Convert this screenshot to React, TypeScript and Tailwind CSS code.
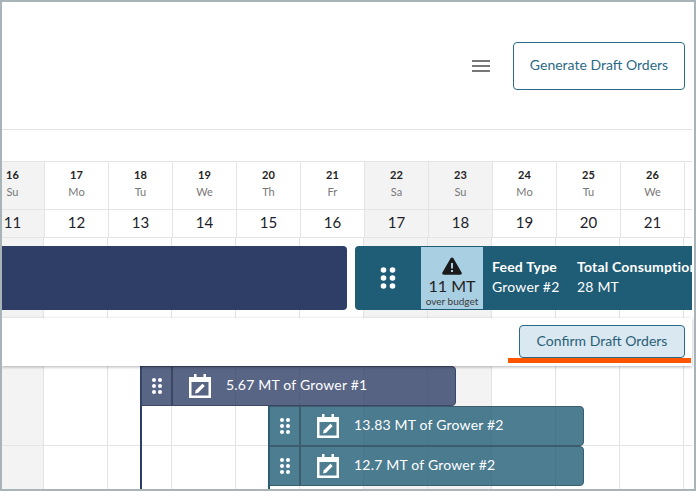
const font = { fontFamily: 'Lato, "Noto Sans", sans-serif' };

const days = [
  { d: 16, w: 'Su', n: 11, off: true },
  { d: 17, w: 'Mo', n: 12 },
  { d: 18, w: 'Tu', n: 13 },
  { d: 19, w: 'We', n: 14 },
  { d: 20, w: 'Th', n: 15 },
  { d: 21, w: 'Fr', n: 16 },
  { d: 22, w: 'Sa', n: 17, off: true },
  { d: 23, w: 'Su', n: 18, off: true },
  { d: 24, w: 'Mo', n: 19 },
  { d: 25, w: 'Tu', n: 20 },
  { d: 26, w: 'We', n: 21 },
];

function Dots({ big }: { big?: boolean }) {
  const r = big ? 2.8 : 2;
  const dx = big ? 4.5 : 3;
  const h = big ? 8 : 6;
  return (
    <svg width={big ? 18 : 12} height={big ? 26 : 18} viewBox={big ? '-9 -13 18 26' : '-6 -9 12 18'} fill="#fff">
      {[-1, 1].map((x) =>
        [-1, 0, 1].map((y) => <circle key={`${x}${y}`} cx={x * dx} cy={y * h} r={r} />)
      )}
    </svg>
  );
}

function CalendarEdit() {
  return (
    <svg width="22" height="24" viewBox="0 0 22 24" fill="#fff">
      <path d="M5 0h2.5v3h7V0H17v3h5v21H0V3h5z M2.5 8v13.5h17V8z" fillRule="evenodd" />
      <path d="M6 19.5l.8-3.2 6.6-6.6 2.4 2.4-6.6 6.6z" />
    </svg>
  );
}

function GridCols() {
  return (
    <div className="flex h-full">
      {days.map((d, i) => (
        <div
          key={d.d}
          className={`${i === 0 ? 'w-[42px]' : 'w-[64px]'} shrink-0 h-full border-r border-[#e2e2e2] ${d.off ? 'bg-[#f3f3f3]' : ''}`}
        />
      ))}
    </div>
  );
}

function GanttBar({ top, left, color, border, label }: { top: string; left: string; color: string; border: string; label: string }) {
  return (
    <div className={`absolute ${top} ${left} ${color} ${border} w-[315px] h-[40px] flex items-center rounded-r-[4px] border text-white text-[14px]`}>
      <div className={`w-[31px] h-full flex items-center justify-center border-r-2 ${border}`}>
        <Dots />
      </div>
      <div className="ml-[16px]">
        <CalendarEdit />
      </div>
      <span className="ml-[15px] pb-[3px] tracking-[0.2px]">{label}</span>
    </div>
  );
}

export default function App() {
  return (
    <div style={font} className="w-[696px] h-[491px] overflow-hidden bg-white border-2 border-[#a9b4b8] box-border text-[#222]">
      <div className="w-[690px] h-full flex flex-col">
        <div className="h-[128px] shrink-0 border-b border-[#e4e4e4] flex items-start justify-end">
          <div className="flex items-center mt-[40px] mr-[7px]">
            <div className="w-[18px] flex flex-col gap-[3px] mr-[23px]">
              <div className="h-[2px] bg-[#777]" />
              <div className="h-[2px] bg-[#777]" />
              <div className="h-[2px] bg-[#777]" />
            </div>
            <button className="w-[172px] h-[48px] pb-[3px] rounded-[4px] border border-[#2b6a86] text-[#2b6a86] text-[14px]">
              Generate Draft Orders
            </button>
          </div>
        </div>
        <div className="h-[32px] shrink-0 border-b border-[#e4e4e4]" />

        <div className="flex h-[48px] shrink-0 border-b border-[#e4e4e4]">
          {days.map((d, i) => (
            <div
              key={d.d}
              className={`${i === 0 ? 'w-[43px] pr-[21px]' : 'w-[64px]'} shrink-0 flex flex-col items-center pt-[5px] border-r border-[#e4e4e4] ${d.off ? 'bg-[#f3f3f3]' : ''}`}
            >
              <span className="text-[11px] font-bold leading-[16px]">{d.d}</span>
              <span className="text-[11px] text-[#777] leading-[18px]">{d.w}</span>
            </div>
          ))}
        </div>
        <div className="flex h-[28px] shrink-0 border-b border-[#e4e4e4]">
          {days.map((d, i) => (
            <div
              key={d.d}
              className={`${i === 0 ? 'w-[43px] pr-[21px]' : 'w-[64px]'} shrink-0 flex items-center justify-center pb-[3px] border-r border-[#e4e4e4] text-[15px] text-[#1d1d2b] ${d.off ? 'bg-[#f3f3f3]' : ''}`}
            >
              {d.n}
            </div>
          ))}
        </div>

        <div className="relative h-[80px] shrink-0 overflow-hidden">
          <GridCols />
          <div className="absolute top-[8px] left-0 w-[345px] h-[64px] bg-[#2f3e66] rounded-r-[4px]" />
          <div className="absolute top-[8px] left-[353px] right-0 h-[64px] bg-[#1f5c75] rounded-l-[4px] flex text-white overflow-hidden">
            <div className="w-[66px] shrink-0 flex items-center justify-center">
              <Dots big />
            </div>
            <div className="w-[62px] shrink-0 my-[1px] bg-[#a9cfe3] text-[#222] flex flex-col items-center pt-[10px]">
              <svg width="20" height="18" viewBox="0 0 20 18">
                <path d="M10 0.5c.6 0 1.1.3 1.4.8l8.2 14.2c.6 1-.1 2.2-1.3 2.2H1.7c-1.2 0-1.9-1.2-1.3-2.2L8.6 1.3c.3-.5.8-.8 1.4-.8z" fill="#1a1a1a" />
                <rect x="9" y="6" width="2" height="5.5" fill="#a9cfe3" />
                <rect x="9" y="13" width="2" height="2" fill="#a9cfe3" />
              </svg>
              <span className="text-[16px] leading-[20px] mt-[1px]">11 MT</span>
              <span className="text-[10px] leading-[10px] text-[#3a3a3a]">over budget</span>
            </div>
            <div className="ml-[9px] w-[85px] shrink-0 pt-[11px] text-[14px] leading-[20px]">
              <div className="font-bold tracking-[0.2px]">Feed Type</div>
              <div className="tracking-[0.2px]">Grower #2</div>
            </div>
            <div className="pt-[11px] text-[14px] leading-[20px] whitespace-nowrap">
              <div className="font-bold tracking-[0.2px]">Total Consumption</div>
              <div className="tracking-[0.2px]">28 MT</div>
            </div>
          </div>
        </div>

        <div className="relative z-10 h-[48px] shrink-0 bg-white shadow-[0_1px_3px_rgba(0,0,0,0.3)] flex justify-end items-start pt-[7px] pr-[7px]">
          <button className="w-[166px] h-[33px] pb-[2px] rounded-[4px] border border-[#2b6a86] bg-[#d9e8f1] text-[#2b5f78] text-[14px]">
            Confirm Draft Orders
          </button>
          <div className="absolute left-[506px] top-[40px] w-[183px] h-[5px] bg-[#ff5500]" />
        </div>

        <div className="relative flex-1 overflow-hidden">
          <GridCols />
          <div className="absolute left-0 right-0 top-[79px] h-px bg-[#e4e4e4]" />
          <div className="absolute left-[138px] top-0 bottom-0 w-[2px] bg-[#2f3e66]" />
          <div className="absolute left-[266px] top-[40px] bottom-0 w-[2px] bg-[#1f5c75]" />
          <GanttBar top="top-0" left="left-[139px]" color="bg-[#2f3e66]/80" border="border-[#3c4763]" label="5.67 MT of Grower #1" />
          <GanttBar top="top-[40px]" left="left-[267px]" color="bg-[#1f5c75]/80" border="border-[#3e5d6c]" label="13.83 MT of Grower #2" />
          <GanttBar top="top-[80px]" left="left-[267px]" color="bg-[#1f5c75]/80" border="border-[#3e5d6c]" label="12.7 MT of Grower #2" />
        </div>
      </div>
    </div>
  );
}
